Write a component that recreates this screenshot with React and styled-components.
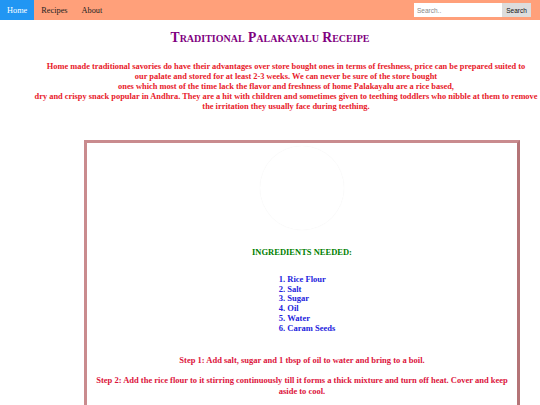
import React from "react";
import styled, { createGlobalStyle } from "styled-components";

const Global = createGlobalStyle`
  html, body { margin: 0; padding: 0; background: #fff; }
  body { font-family: "Liberation Serif", "Times New Roman", serif; overflow: hidden; }
`;

const Nav = styled.nav`
  display: flex;
  align-items: stretch;
  height: 20px;
  background: #ffa07a;
`;

const NavLink = styled.a`
  display: flex;
  align-items: center;
  padding: 0 7px;
  font-size: 8.3px;
  color: ${(p) => (p.$active ? "#fff" : "#222")};
  background: ${(p) => (p.$active ? "#2196f3" : "transparent")};
  text-decoration: none;
`;

const SearchBox = styled.form`
  margin-left: auto;
  margin-right: 9px;
  display: flex;
  align-items: center;
`;

const SearchInput = styled.input`
  box-sizing: border-box;
  width: 88px;
  height: 14px;
  border: none;
  padding: 0 3px;
  font-family: "Liberation Sans", Arial, sans-serif;
  font-size: 6.5px;
  outline: none;
  &::placeholder { color: #888; }
`;

const SearchButton = styled.button`
  box-sizing: border-box;
  width: 29px;
  height: 14px;
  border: none;
  padding: 0;
  background: #ddd;
  font-family: "Liberation Sans", Arial, sans-serif;
  font-size: 6.5px;
  color: #111;
`;

const Title = styled.h1`
  margin: 10px 0 0;
  text-align: center;
  font-size: 13.6px;
  line-height: 15px;
  font-variant: small-caps;
  font-weight: bold;
  color: #800080;
`;

const Intro = styled.p`
  margin: 17px 0 0 32px;
  text-align: center;
  font-size: 8.4px;
  line-height: 10px;
  font-weight: bold;
  color: #e8202a;
  white-space: nowrap;
`;

const RecipeBox = styled.section`
  box-sizing: border-box;
  margin: 28px 0 0 84px;
  width: 436px;
  min-height: 300px;
  border: 3px solid #c98b8e;
  border-right-color: #b47477;
  border-bottom-color: #b47477;
  display: flex;
  flex-direction: column;
  align-items: center;
  text-align: center;
  font-weight: bold;
`;

const Photo = styled.div`
  margin-top: 3px;
  width: 84px;
  height: 84px;
  border-radius: 50%;
  box-shadow: 0 0 1px rgba(0, 0, 0, 0.08);
`;

const Heading = styled.h3`
  margin: 17px 0 0;
  font-size: 8.5px;
  line-height: 10px;
  color: #008000;
`;

const List = styled.ol`
  margin: 18px 0 0 10px;
  padding: 0;
  list-style: inside decimal;
  text-align: left;
  font-size: 8.5px;
  line-height: 9.7px;
  color: #2222dd;
`;

const Step = styled.p`
  margin: ${(p) => p.$top}px 0 0;
  padding: 0 8px;
  font-size: 8.5px;
  line-height: 11px;
  color: #dc143c;
`;

const ingredients = ["Rice Flour", "Salt", "Sugar", "Oil", "Water", "Caram Seeds"];

export default function App() {
  return (
    <>
      <Global />
      <Nav>
        <NavLink href="#" $active>Home</NavLink>
        <NavLink href="#">Recipes</NavLink>
        <NavLink href="#">About</NavLink>
        <SearchBox onSubmit={(e) => e.preventDefault()}>
          <SearchInput type="text" placeholder="Search.." />
          <SearchButton type="submit">Search</SearchButton>
        </SearchBox>
      </Nav>
      <Title>Traditional Palakayalu Receipe</Title>
      <Intro>
        Home made traditional savories do have their advantages over store bought ones in terms of freshness, price can be prepared suited to
        <br />
        our palate and stored for at least 2-3 weeks. We can never be sure of the store bought
        <br />
        ones which most of the time lack the flavor and freshness of home Palakayalu are a rice based,
        <br />
        dry and crispy snack popular in Andhra. They are a hit with children and sometimes given to teething toddlers who nibble at them to remove
        <br />
        the irritation they usually face during teething.
      </Intro>
      <RecipeBox>
        <Photo />
        <Heading>INGREDIENTS NEEDED:</Heading>
        <List>
          {ingredients.map((i) => (
            <li key={i}>{i}</li>
          ))}
        </List>
        <Step $top={22}>Step 1: Add salt, sugar and 1 tbsp of oil to water and bring to a boil.</Step>
        <Step $top={9}>
          Step 2: Add the rice flour to it stirring continuously till it forms a thick mixture and turn off heat. Cover and keep aside to cool.
        </Step>
      </RecipeBox>
    </>
  );
}
